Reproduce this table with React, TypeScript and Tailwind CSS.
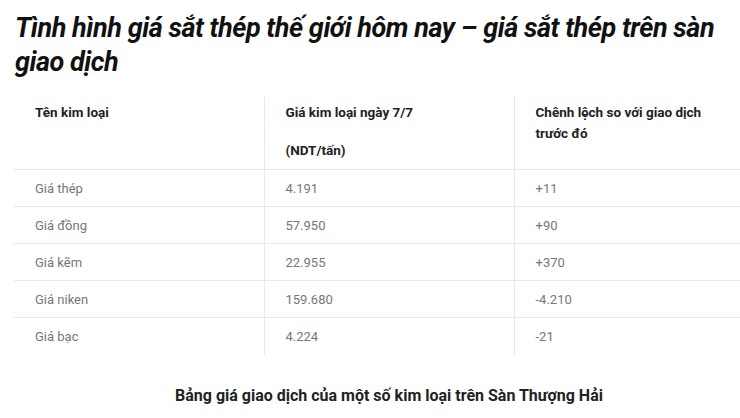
const rows = [
  ['Giá thép', '4.191', '+11'],
  ['Giá đồng', '57.950', '+90'],
  ['Giá kẽm', '22.955', '+370'],
  ['Giá niken', '159.680', '-4.210'],
  ['Giá bạc', '4.224', '-21'],
]

export default function App() {
  return (
    <div className="w-[740px] h-[418px] overflow-hidden bg-white" style={{ fontFamily: 'Roboto, "Noto Sans", sans-serif' }}>
      <div className="w-[750px] pl-[15px] pt-[11px]">
        <h1 className="text-[27px] leading-[34px] font-bold italic text-[#111] tracking-[-0.45px]">
          Tình hình giá sắt thép thế giới hôm nay – giá sắt thép trên sàn giao dịch
        </h1>

        <table className="mt-[17px] w-[750px] -ml-px border-collapse table-fixed text-[13px] leading-[21px]">
          <thead>
            <tr className="border-b border-[#e9e9e9] align-top text-[13.5px]">
              <th className="w-[250px] px-[21px] pt-[6px] pb-[8px] text-left font-bold text-[#222]">Tên kim loại</th>
              <th className="w-[250px] px-[21px] pt-[6px] pb-[8px] text-left font-bold text-[#222] border-l border-[#e9e9e9]">
                <p>Giá kim loại ngày 7/7</p>
                <p className="mt-[17px]">(NDT/tấn)</p>
              </th>
              <th className="w-[250px] pl-[21px] pr-[50px] pt-[6px] pb-[8px] text-left font-bold text-[#222] border-l border-[#e9e9e9]">
                Chênh lệch so với giao dịch trước đó
              </th>
            </tr>
          </thead>
          <tbody>
            {rows.map((r, i) => (
              <tr key={r[0]} className={i < rows.length - 1 ? 'border-b border-[#e9e9e9]' : ''}>
                <td className="h-[37px] px-[21px] text-[#777]">{r[0]}</td>
                <td className="h-[37px] px-[21px] text-[#777] border-l border-[#e9e9e9]">{r[1]}</td>
                <td className="h-[37px] px-[21px] text-[#777] border-l border-[#e9e9e9]">{r[2]}</td>
              </tr>
            ))}
          </tbody>
        </table>

        <p className="mt-[30px] w-[750px] -ml-px text-center text-[16px] leading-[22px] font-bold text-[#222]">
          Bảng giá giao dịch của một số kim loại trên Sàn Thượng Hải
        </p>
      </div>
    </div>
  )
}
